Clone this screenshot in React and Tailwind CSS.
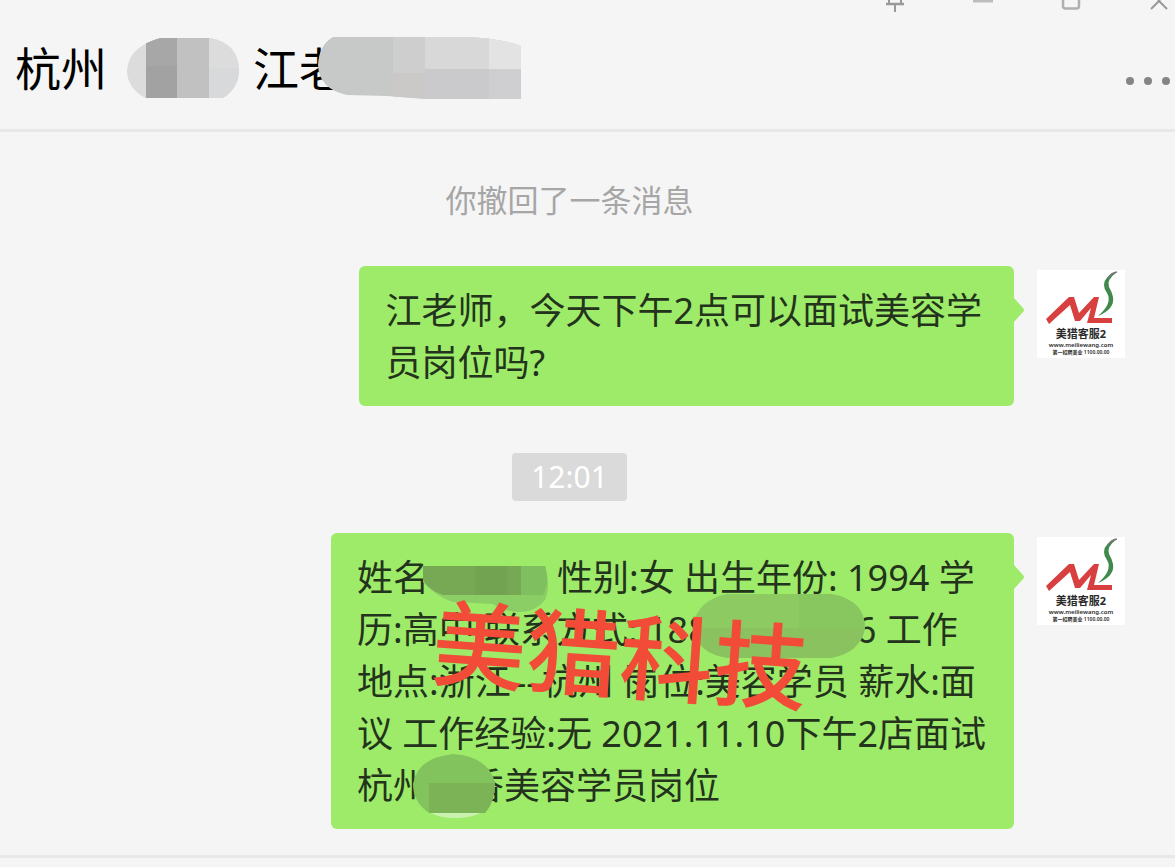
import React from "react";

const PinIcon = () => (
  <svg className="block h-3 w-5" viewBox="0 0 20 12" fill="none" stroke="#999" strokeWidth="2">
    <path d="M4 0V4M16 0V4" />
    <path d="M1 4H19" strokeWidth="2.5" />
    <path d="M10 4V12" />
  </svg>
);

const MinimizeIcon = () => (
  <svg className="block h-3 w-5" viewBox="0 0 20 12" fill="none" stroke="#bdbdbd" strokeWidth="3">
    <path d="M0 1H20" />
  </svg>
);

const MaximizeIcon = () => (
  <svg className="block h-3 w-5" viewBox="0 0 20 12" fill="none" stroke="#b0b0b0" strokeWidth="2.5">
    <path d="M2 0V6Q2 8.5 4.500 8.500H15.500Q18 8.500 18 6V0" />
  </svg>
);

const CloseIcon = () => (
  <svg className="block h-3 w-5" viewBox="0 0 20 12" fill="none" stroke="#999" strokeWidth="2">
    <path d="M2 9L10 1L18 9" />
    <path d="M9 0L10 1L11 0" />
  </svg>
);

const controls = [
  { label: "置顶", Icon: PinIcon },
  { label: "最小化", Icon: MinimizeIcon },
  { label: "最大化", Icon: MaximizeIcon },
  { label: "关闭", Icon: CloseIcon },
];

const Avatar = () => (
  <svg className="mt-1 block h-[88px] w-[88px] shrink-0 bg-white" viewBox="0 0 88 88" role="img" aria-label="美猎客服2">
    <path d="M9 49L32 27H37L42 43L57 27H62L57 48H75V53H50L54 38L43 51H38L33 35L12 54Z" fill="#d84040" />
    <path d="M80 2Q67 6 67 15Q67 19 70 23Q76 33 61 46Q78 39 76 27Q75 22 72 17Q69 10 80 2Z" fill="#3f8a4c" />
    <path d="M80 2Q74 3 71 8" fill="none" stroke="#777" strokeWidth="1.500" />
    <g fill="#2b2b2b" textAnchor="middle" fontFamily="'Noto Sans', 'Noto Sans CJK SC', sans-serif">
      <text x="44" y="68" fontSize="11" fontWeight="700">美猎客服2</text>
      <text x="44" y="77" fontSize="6" fontWeight="600">www.meiliewang.com</text>
      <text x="44" y="84" fontSize="5" fontWeight="600">第一招聘美业 1100.00.00</text>
    </g>
  </svg>
);

const Message = ({ className, children }) => (
  <div className="flex items-start justify-end pr-[50px]">
    <div className={`relative rounded-md bg-[#9eeb6a] pt-[19px] pb-[17px] pl-[26px] text-4xl leading-[52px] whitespace-nowrap text-[#23331c] ${className}`}>
      {children}
      <svg className="absolute top-8 left-full h-6 w-3" viewBox="0 0 12 24" aria-hidden="true">
        <path d="M0 0L9 10Q11 12 9 14L0 24Z" fill="#9eeb6a" />
      </svg>
    </div>
    <div className="ml-[23px]">
      <Avatar />
    </div>
  </div>
);

const App = () => {
  return (
    <div className="min-h-screen overflow-hidden bg-[#f5f5f5] font-['Noto_Sans','Noto_Sans_CJK_SC',sans-serif]">
      <header className="border-b-[3px] border-[#e8e8e8]">
        <div className="flex h-3 justify-end gap-[68px] pr-1.5">
          {controls.map(({ label, Icon }) => (
            <button key={label} type="button" aria-label={label}>
              <Icon />
            </button>
          ))}
        </div>
        <div className="flex h-[117px] items-center justify-between pr-1 pb-1.5 pl-[15px]">
          <h1 className="flex items-center text-[46px] leading-[60px] text-black">
            <span>杭州</span>
            <span className="flex w-[146px] justify-end pr-[14px]">
              <svg className="h-[60px] w-28" viewBox="0 0 112 60" aria-hidden="true">
                <clipPath id="place-mask">
                  <path d="M34 0H84Q112 6 112 32Q112 50 96 60H18Q0 50 0 32Q2 8 34 0Z" />
                </clipPath>
                <g clipPath="url(#place-mask)">
                  <rect width="112" height="60" fill="#dcdcdc" />
                  <rect x="19" width="31" height="60" fill="#a2a2a2" />
                  <rect x="50" width="32" height="60" fill="#c1c1c1" />
                  <rect x="19" width="31" height="28" fill="#a7a7a7" />
                  <rect x="82" y="30" width="30" height="30" fill="#d8d9da" />
                </g>
              </svg>
            </span>
            <span>江老</span>
            <svg className="relative -ml-7 h-[62px] w-[204px]" viewBox="0 0 204 62" aria-hidden="true">
              <clipPath id="name-mask">
                <path d="M16 0H150Q182 1 204 9V62H110L70 59L30 58Q2 52 1 28Q2 8 16 0Z" />
              </clipPath>
              <g clipPath="url(#name-mask)">
                <rect width="204" height="62" fill="#c7c8c8" />
                <rect x="76" width="36" height="36" fill="#cecece" />
                <rect x="76" y="36" width="36" height="26" fill="#cbc9c7" />
                <rect x="108" width="64" height="32" fill="#d8d8d8" />
                <rect x="108" y="32" width="64" height="30" fill="#cacacd" />
                <rect x="172" width="32" height="32" fill="#e3e3e3" />
                <rect x="172" y="32" width="32" height="30" fill="#cfcfd1" />
              </g>
            </svg>
          </h1>
          <button type="button" aria-label="更多" className="mt-[26px]">
            <svg className="block h-3 w-12" viewBox="0 0 48 12" fill="#858585">
              <circle cx="7" cy="6" r="4" />
              <circle cx="25" cy="6" r="4" />
              <circle cx="43" cy="6" r="4" />
            </svg>
          </button>
        </div>
      </header>

      <main className="pt-12 pb-[26px]">
        <p className="pr-9 text-center text-[31px] leading-10 text-[#a6a6a6]">你撤回了一条消息</p>

        <div className="mt-[46px]">
          <Message className="pr-8">
            <p>江老师，今天下午2点可以面试美容学</p>
            <p>员岗位吗?</p>
          </Message>
        </div>

        <div className="mt-[47px] mb-8 flex justify-center pr-9">
          <time className="rounded bg-[#dadada] px-[19px] text-3xl leading-[48px] text-white">12:01</time>
        </div>

        <Message className="pr-7">
          <p>
            姓名
            <span className="relative z-10 inline-block h-[52px] w-32 align-top">
              <svg className="absolute top-3 -left-1.5 h-12 w-[126px]" viewBox="0 0 126 48" aria-hidden="true">
                <path d="M0 2H122Q128 22 122 36Q112 48 98 48Q80 48 70 40L30 38Q12 32 0 18Z" fill="#8bce65" />
                <path d="M0 2H122Q127 18 120 31H20Q6 26 0 16Z" fill="#80bf5f" />
                <path d="M0 2H98V31H20Q6 26 0 16Z" fill="#77a955" />
                <path d="M52 2H84V31H52Z" fill="#72a351" />
              </svg>
            </span>
            性别:女 出生年份: 1994 学
          </p>
          <p>
            历:高中 联系方式: 188
            <span className="relative z-10 inline-block h-[52px] w-[147px] align-top">
              <svg className="absolute -top-2.5 -left-4 h-16 w-[172px]" viewBox="0 0 172 64" aria-hidden="true">
                <path d="M34 0H138Q172 6 172 34Q168 58 138 64H36Q4 60 0 32Q4 6 34 0Z" fill="#8dcb62" />
                <path d="M0 34H172Q168 58 138 64H36Q4 60 0 34Z" fill="#89c25f" />
                <path d="M106 0H138Q172 6 172 34H106Z" fill="#88c760" />
              </svg>
            </span>
            6 工作
          </p>
          <p>
            地点:浙江<span className="px-1">--</span>杭州 岗位:美容学员 薪水:面
          </p>
          <p>议 工作经验:无 2021.11.10下午2店面试</p>
          <p>
            杭州
            <span className="relative z-10 inline-block h-[52px] w-[39px] align-top">
              <svg className="absolute -top-1.5 -left-4 h-16 w-[82px]" viewBox="0 0 82 64" aria-hidden="true">
                <path d="M14 56H72Q62 64 40 64Q24 64 14 56Z" fill="#c9f2ae" />
                <path d="M40 0Q74 2 82 28Q82 48 72 59H16Q0 48 0 30Q4 4 40 0Z" fill="#82c35d" />
                <path d="M16 29H82Q82 48 72 59H16Z" fill="#7bb356" />
              </svg>
            </span>
            香美容学员岗位
          </p>
          <span className="absolute top-[75px] left-[101px] z-20 rotate-4 text-[94px] leading-[94px] font-medium text-[#f24b37]">
            美猎科技
          </span>
        </Message>
      </main>

      <footer className="border-t-[3px] border-[#e8e8e8]" />
    </div>
  );
};

export default App;
